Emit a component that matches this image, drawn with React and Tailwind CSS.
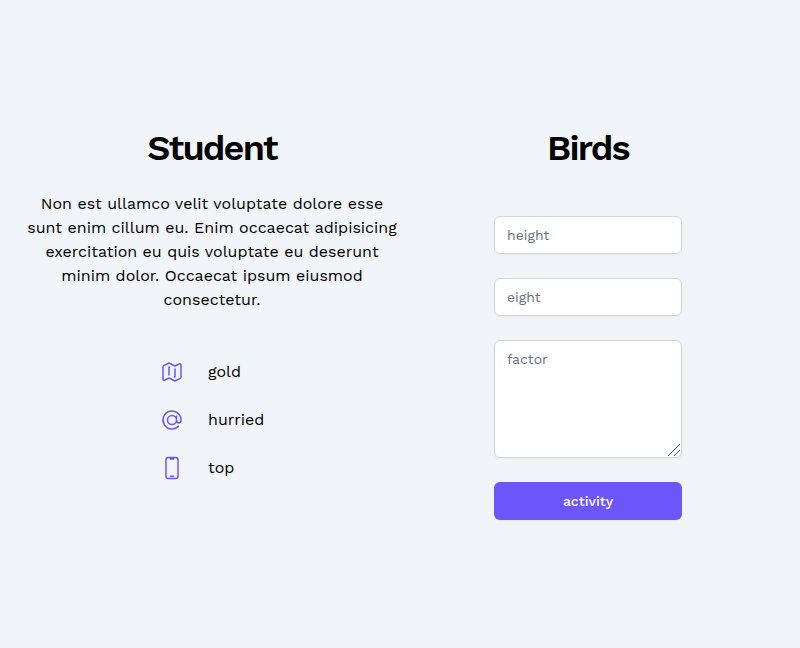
import { HiOutlineMap, HiOutlineAtSymbol, HiOutlineDevicePhoneMobile } from "react-icons/hi2";

const contacts = [
  { Icon: HiOutlineMap, label: "gold" },
  { Icon: HiOutlineAtSymbol, label: "hurried" },
  { Icon: HiOutlineDevicePhoneMobile, label: "top" },
];

const field =
  "block w-full rounded-md border border-gray-300 bg-white px-3 py-2 text-sm leading-5 text-black shadow-xs placeholder:text-gray-500 focus:outline-none";

export default function App() {
  return (
    <main className="flex h-[648px] w-[800px] items-start bg-slate-100 pt-32 font-['Work_Sans','Inter',sans-serif] text-black">
      <section className="flex w-[424px] flex-col items-center">
        <h1 className="text-4xl leading-10 font-semibold tracking-tighter">Student</h1>
        <p className="mt-6 text-center text-base leading-6 whitespace-nowrap">
          Non est ullamco velit voluptate dolore esse<br />
          sunt enim cillum eu. Enim occaecat adipisicing<br />
          exercitation eu quis voluptate eu deserunt<br />
          minim dolor. Occaecat ipsum eiusmod<br />
          consectetur.
        </p>
        <ul className="mt-12 flex w-[104px] flex-col gap-6">
          {contacts.map(({ Icon, label }) => (
            <li key={label} className="flex items-center gap-6">
              <Icon className="size-6 shrink-0 text-[#6c55f9]" />
              <span>{label}</span>
            </li>
          ))}
        </ul>
      </section>
      <section className="ml-[70px] flex w-[188px] flex-col items-center">
        <h2 className="text-4xl leading-10 font-semibold tracking-tighter">Birds</h2>
        <form className="mt-12 flex w-full flex-col gap-6">
          <input className={field} placeholder="height" />
          <input className={field} placeholder="eight" />
          <div className="relative">
            <textarea className={field + " h-[118px] resize-none"} placeholder="factor" />
            <svg
              className="pointer-events-none absolute right-[2px] bottom-[2px]"
              width="12"
              height="12"
              viewBox="0 0 12 12"
              stroke="#505050"
              strokeWidth="1"
            >
              <path d="M0 12 12 0M6 12 12 6" />
            </svg>
          </div>
          <button type="button" className="h-[38px] rounded-md bg-[#6c55f9] text-sm font-medium text-white shadow-xs">activity</button>
        </form>
      </section>
    </main>
  );
}
